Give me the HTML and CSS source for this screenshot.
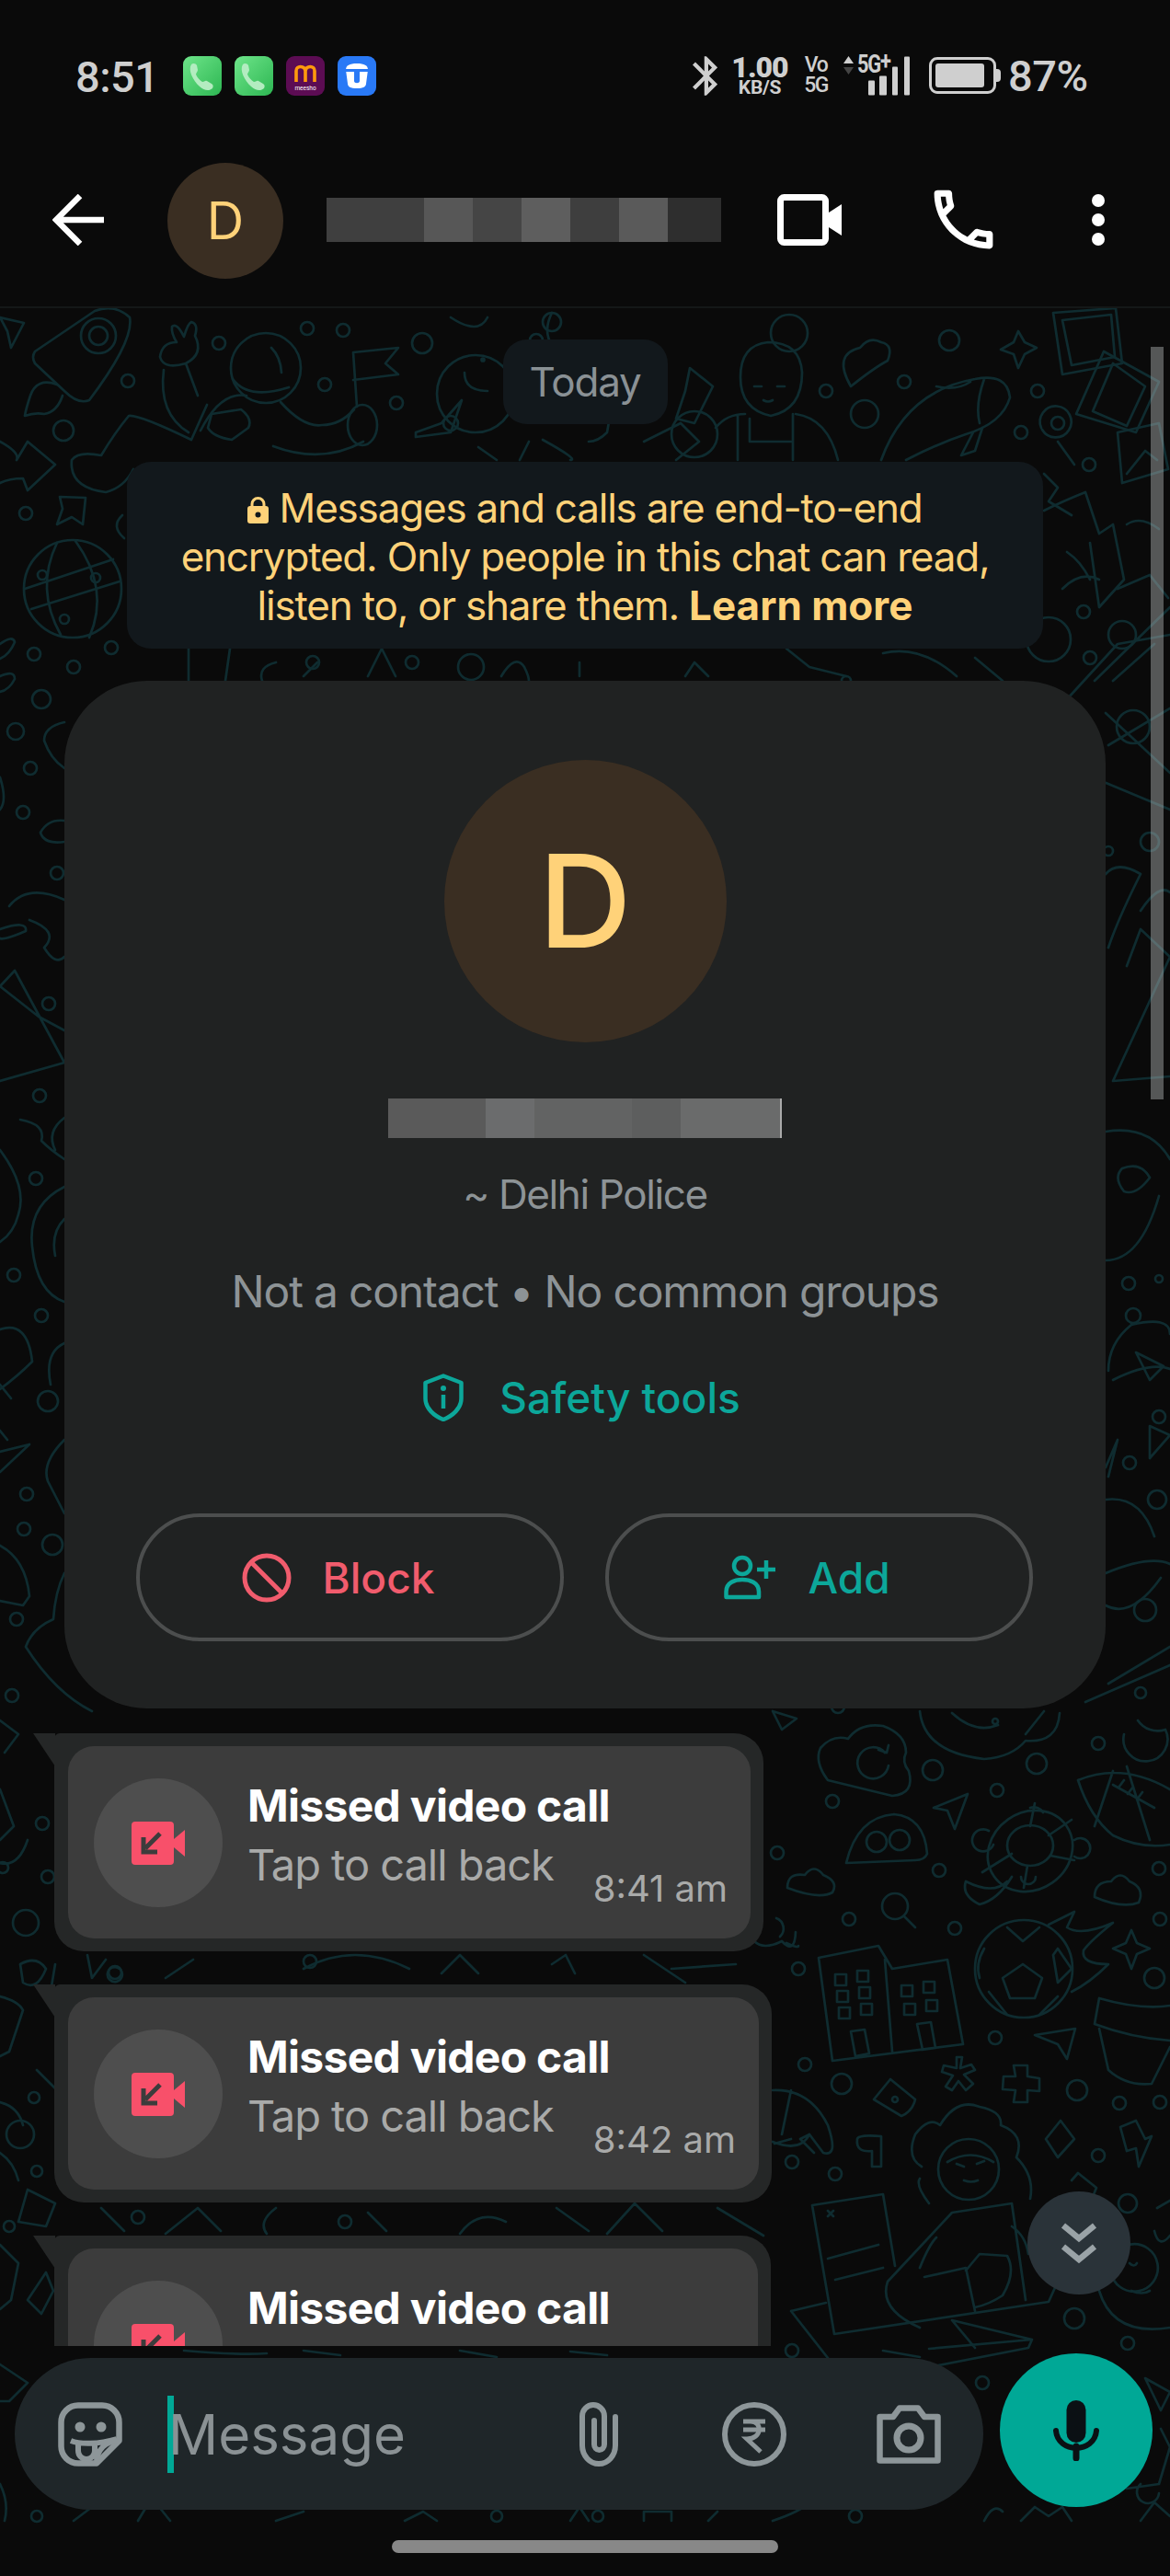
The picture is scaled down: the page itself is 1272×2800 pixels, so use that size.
FILE: index.html
```html
<!DOCTYPE html>
<html lang="en">
  <head>
    <meta charset="UTF-8" />
    <title>Chat</title>
    <link rel="stylesheet" href="styles.css">
  </head>
  <body>
    <div class="phone">
      <!-- status bar -->
      <div class="status">
        <span class="clock">8:51</span>
        <div class="apps">
          <svg class="app" viewBox="0 0 42 43"><defs><linearGradient id="green" x1="0" y1="0" x2="1" y2="1"><stop offset="0" stop-color="#6ee58a"/><stop offset="1" stop-color="#2db652"/></linearGradient></defs><rect width="42" height="43" rx="9" fill="url(#green)"/><path d="M9 9c2-2 5-1 6 1l1 5c0 2-2 3-2 5 2 4 4 6 7 8 2 0 3-2 5-1l5 3c2 1 2 3 1 5-3 3-9 3-14-2C11 27 5 15 9 9z" fill="#b3ecc0"/></svg>
          <svg class="app" viewBox="0 0 42 43"><rect width="42" height="43" rx="9" fill="url(#green)"/><path d="M9 9c2-2 5-1 6 1l1 5c0 2-2 3-2 5 2 4 4 6 7 8 2 0 3-2 5-1l5 3c2 1 2 3 1 5-3 3-9 3-14-2C11 27 5 15 9 9z" fill="#b3ecc0"/></svg>
          <svg class="app" viewBox="0 0 42 43"><rect width="42" height="43" rx="9" fill="#5c0c53"/><path d="M11 28V16c0-6 9-6 10 0v12M21 16c1-6 10-6 10 0v12" fill="none" stroke="#ff9a0d" stroke-width="3.6"/><text x="21" y="37" class="meesho">meesho</text></svg>
          <svg class="app" viewBox="0 0 42 43"><rect width="42" height="43" rx="9" fill="#2979f6"/><path d="M9 15c0-5 4-7 12-7s12 2 12 7l-2 15c0 3-3 5-10 5s-10-2-10-5z" fill="#fff"/><path d="M9 17h9v10c0 3 6 3 6 0V17h9v-3H9z" fill="#2979f6"/></svg>
        </div>
        <div class="sys">
          <svg class="bt" viewBox="5 2 12.7 20"><path d="M17.71 7.71L12 2h-1v7.59L6.41 5 5 6.41 10.59 12 5 17.59 6.41 19 11 14.41V22h1l5.71-5.71-4.3-4.29 4.3-4.29zM13 5.83l1.88 1.88L13 9.59V5.83zm1.88 10.46L13 18.17v-3.76l1.88 1.88z" fill="#cfcfcf"/></svg>
          <div class="speed"><b>1.00</b><small>KB/S</small></div>
          <div class="volte"><span>Vo</span><span>5G</span></div>
          <div class="net">
            <svg class="arrows" viewBox="0 0 11 20"><path d="M5.500 0L11 8H0z" fill="#cfcfcf"/><path d="M5.500 20L11 12H0z" fill="#444"/></svg>
            <span class="fiveg">5G<i>+</i></span>
            <svg class="bars" viewBox="0 0 46 42"><rect y="26" width="7" height="16" rx="1"/><rect x="12" y="21" width="8" height="21" rx="1"/><rect x="26" y="11" width="6" height="31" rx="1"/><rect x="39" width="6" height="42" rx="1"/></svg>
          </div>
          <div class="battery"><span class="level"></span></div>
          <span class="percent">87%</span>
        </div>
      </div>

      <!-- header -->
      <div class="topbar">
        <svg class="back" viewBox="0 0 56 56"><path d="M56 28H4M30 2L4 28l26 26" fill="none" stroke="#fff" stroke-width="6.500"/></svg>
        <div class="avatar">D</div>
        <div class="blur-name"></div>
        <svg class="video" viewBox="0 0 70 56"><rect x="3.500" y="3.500" width="49" height="49" rx="4" fill="none" stroke="#fff" stroke-width="7"/><path d="M56 20L70 11v34L56 36z" fill="#fff"/></svg>
        <svg class="call" viewBox="0 0 24 24"><path d="M6.540 5c.06.89.21 1.76.45 2.590l-1.200 1.200c-.41-1.200-.67-2.470-.76-3.790h1.510m9.860 12.020c.85.24 1.720.39 2.600.45v1.490c-1.320-.09-2.590-.35-3.800-.75l1.200-1.190M7.500 3H4c-.55 0-1 .45-1 1 0 9.390 7.610 17 17 17 .55 0 1-.45 1-1v-3.490c0-.55-.45-1-1-1-1.240 0-2.450-.2-3.570-.57-.1-.04-.21-.05-.31-.05-.26 0-.51.1-.71.29l-2.200 2.200c-2.830-1.450-5.150-3.760-6.590-6.590l2.200-2.200c.28-.28.36-.67.25-1.020C8.700 6.450 8.500 5.250 8.500 4c0-.55-.45-1-1-1z" fill="#fff"/></svg>
        <div class="dots"><span></span><span></span><span></span></div>
      </div>

      <!-- chat area -->
      <div class="chat">
        <svg class="wallpaper" viewBox="0 335 1272 2408">
          <g fill="none" stroke="#0f2c30" stroke-width="2.700" stroke-linecap="round" stroke-linejoin="round">
            <!-- top band, left -->
            <path d="M38 382L103 338Q125 330 141 345Q146 370 97 435Q85 440 70 425L38 395Q34 388 38 382z"/>
            <circle cx="107" cy="365" r="19"/><circle cx="107" cy="365" r="10"/>
            <path d="M62 418Q40 410 33 430Q28 445 27 452Q38 448 48 450Q62 448 68 430"/>
            <path d="M0 345L26 351 12 378 8 360z"/>
            <path d="M178 402Q172 450 205 470M215 430L202 395Q222 385 212 365Q216 352 208 350 204 352 200 366 192 350 187 355 186 362 192 372 176 372 174 388 178 402 202 395"/>
            <circle cx="289" cy="400" r="38"/><path d="M253 412Q270 435 314 421M295 378Q305 388 306 405"/>
            <path d="M218 468Q240 425 268 430M225 440L208 478Q150 450 140 452Q125 470 110 495Q85 490 78 500Q75 530 115 535 135 530 145 510"/>
            <path d="M230 450L262 445Q275 455 270 465L252 478Q232 475 226 465z"/>
            <path d="M384 383L433 378 419 395 433 407 384 413M384 383L388 442"/>
            <ellipse cx="394" cy="462" rx="16" ry="22"/>
            <path d="M305 437Q330 465 350 462Q370 462 385 445M297 485Q350 505 395 480"/>
            <path d="M0 480Q22 492 18 500L30 480 60 505 30 533 25 520Q10 520 0 525"/>
            <circle cx="69" cy="468" r="11"/><circle cx="139" cy="414" r="7"/><circle cx="238" cy="373" r="7"/><circle cx="334" cy="357" r="7"/><circle cx="373" cy="359" r="7"/><circle cx="353" cy="418" r="7"/><circle cx="431" cy="438" r="7"/><circle cx="459" cy="373" r="11"/><circle cx="28" cy="558" r="7"/>
            <path d="M65 540L93 541 90 570 78 562 62 570 68 553z"/>
            <path d="M133 560Q120 572 135 585"/>
            <circle cx="79" cy="640" r="53"/><path d="M27 640L123 608M34 662L130 632M82 588Q120 640 97 693M62 590Q38 640 66 690"/><circle cx="46" cy="625" r="5"/><circle cx="104" cy="628" r="5"/><circle cx="70" cy="673" r="5"/>
            <circle cx="37" cy="711" r="7"/><circle cx="121" cy="704" r="7"/><circle cx="80" cy="725" r="7"/>
            <path d="M0 700Q14 690 16 698 10 712 0 716M0 735Q16 728 16 738 10 750 0 752"/>
            <!-- top band, middle -->
            <circle cx="517" cy="428" r="42"/><path d="M505 405Q505 425 530 425"/><circle cx="525" cy="391" r="1.500"/>
            <path d="M452 470L480 460 502 435 490 470 452 475z"/><circle cx="490" cy="460" r="8"/>
            <path d="M490 345Q520 365 530 345M600 340Q590 360 600 375"/>
            <path d="M655 390Q670 420 660 470Q650 480 640 480"/>
            <path d="M590 478Q630 500 620 500M700 480L740 460 760 480 735 500"/>
            <path d="M575 480L565 500M520 486L540 500"/>
            <circle cx="600" cy="350" r="10"/><circle cx="583" cy="370" r="7"/>
            <path d="M750 400L775 420 755 460 735 455 745 425z"/>
            <path d="M805 410Q805 445 838 452Q872 445 872 405Q870 372 835 372Q805 375 805 410z"/><circle cx="858" cy="362" r="20"/>
            <path d="M820 420h8M845 420h8M830 435q5 3 10 0M778 465Q790 450 810 450M865 450Q900 455 911 500M802 452V500M862 450V500M815 455V480H860"/>
            <circle cx="755" cy="472" r="25"/>
            <path d="M925 420Q905 385 935 378Q945 365 958 372Q972 375 965 392Q950 400 925 420z"/>
            <circle cx="898" cy="425" r="7"/><circle cx="983" cy="415" r="7"/><circle cx="940" cy="450" r="15"/><circle cx="1032" cy="370" r="11"/><circle cx="1128" cy="425" r="7"/><circle cx="1110" cy="470" r="7"/>
            <path d="M958 500Q985 425 1060 412Q1095 405 1098 432Q1090 460 1050 472Q1020 482 985 500M1018 420Q1040 425 1055 415M1058 470L1045 495 1060 490 1068 465M1070 412Q1060 440 1065 460"/>
            <path d="M1107 360L1114 372 1127 378 1114 385 1107 400 1102 385 1088 380 1102 372z"/>
            <path d="M1145 340L1213 335 1220 395 1155 407zM1155 348L1208 342 1212 388 1165 397z"/>
            <path d="M1170 450L1200 382 1260 415 1235 470 1170 450zM1188 447L1210 395 1245 420 1225 463z"/>
            <circle cx="1150" cy="460" r="7"/><path d="M1132 465a17 17 0 1 1 1 2M1150 480l18 25"/>
            <path d="M1215 470L1260 460 1270 510 1220 525z M1225 515L1245 490 1258 500"/>
            <circle cx="1184" cy="505" r="7"/>
            <path d="M1135 515L1150 530 1140 545 1165 560"/>
            <path d="M1135 555Q1155 545 1180 535L1195 580 1210 570 1222 630 1195 660 1185 590M1160 600Q1175 610 1185 630M1155 640Q1175 620 1195 630"/>
            <path d="M1225 570Q1240 560 1260 575M1215 640L1250 625 1270 650"/>
            <circle cx="1178" cy="665" r="7"/><circle cx="1220" cy="690" r="15"/><circle cx="1185" cy="715" r="7"/><circle cx="1140" cy="695" r="24"/><circle cx="920" cy="740" r="5"/>
            <path d="M1160 760L1215 700 1272 690M1190 740L1272 660M1210 740L1255 700"/>
            <path d="M745 735L755 720 770 735M855 705L880 725 920 735M960 710Q1000 700 1040 735M1060 715L1090 740"/>
            <path d="M250 705L245 740M205 705V740M300 720Q280 725 285 740M330 735L345 720M400 735L415 705 430 735M545 735Q560 710 570 725 575 735 575 740M630 735V720"/>
            <circle cx="340" cy="720" r="7"/><circle cx="448" cy="720" r="7"/><circle cx="512" cy="725" r="14"/>
            <!-- left strip -->
            <circle cx="45" cy="760" r="10"/><circle cx="17" cy="795" r="9"/><circle cx="33" cy="835" r="7"/><circle cx="25" cy="883" r="7"/><circle cx="62" cy="949" r="7"/><circle cx="53" cy="1091" r="7"/><circle cx="43" cy="1191" r="7"/><circle cx="39" cy="1281" r="7"/><circle cx="15" cy="1386" r="7"/><circle cx="45" cy="1430" r="7"/><circle cx="52" cy="1523" r="11"/><circle cx="29" cy="1624" r="7"/><circle cx="26" cy="1662" r="7"/><circle cx="57" cy="1679" r="11"/><circle cx="18" cy="1760" r="7"/><circle cx="13" cy="1843" r="7"/>
            <path d="M70 785Q48 790 48 805 55 825 70 835M0 845Q8 870 0 880"/>
            <path d="M70 892Q52 890 44 905Q48 918 70 915M10 985Q30 960 70 978M0 1010Q30 1000 28 1012 5 1022 0 1020M32 1000Q65 1012 48 1030 60 1050 70 1040"/>
            <path d="M16 1055L70 1155 0 1175M16 1055L0 1072 42 1105 70 1120"/>
            <path d="M22 1217Q50 1222 45 1240 55 1250 70 1260M70 1215Q50 1230 60 1250"/>
            <path d="M0 1250Q30 1290 20 1320 15 1340 0 1350M70 1290Q30 1310 35 1355 40 1405 70 1415M70 1325Q55 1340 60 1365"/>
            <path d="M0 1445Q30 1435 35 1480 20 1495 0 1510M70 1460Q48 1470 55 1505 M0 1505L12 1520"/>
            <path d="M0 1578L32 1570 0 1600M0 1555L8 1565M70 1565Q45 1590 52 1610L70 1645"/>
            <path d="M0 1680Q28 1695 32 1735L25 1745 0 1740M70 1710Q60 1730 58 1760 35 1770 28 1790 60 1840 100 1860"/>
            <!-- right strip -->
            <circle cx="1232" cy="790" r="18"/><path d="M1202 775L1272 840M1205 810L1272 770M1200 850L1272 880"/>
            <circle cx="1250" cy="915" r="10"/><circle cx="1205" cy="925" r="5"/>
            <path d="M1202 950Q1215 935 1240 950 1215 1000 1205 1030M1240 990Q1260 960 1272 970M1225 1050L1240 1010 1272 1040 1210 1175 1272 1170"/>
            <path d="M1202 1230Q1250 1222 1272 1260M1202 1370Q1240 1370 1260 1300M1220 1270Q1240 1262 1250 1280 1235 1300 1222 1295 1210 1280 1220 1270z"/>
            <circle cx="1227" cy="1395" r="7"/><circle cx="1260" cy="1390" r="4"/>
            <path d="M1205 1490Q1205 1460 1230 1440 1272 1430 1272 1450M1210 1500Q1250 1480 1272 1488M1235 1470L1265 1485 1250 1500z"/><circle cx="1232" cy="1430" r="8"/>
            <circle cx="1260" cy="1540" r="7"/><circle cx="1228" cy="1590" r="7"/><circle cx="1258" cy="1630" r="10"/>
            <path d="M1202 1595L1215 1565 1205 1605M1250 1550L1272 1560 1250 1585z"/>
            <path d="M1202 1630Q1240 1625 1255 1670M1202 1710Q1250 1690 1272 1700M1202 1745Q1230 1760 1262 1715"/>
            <path d="M1205 1830L1272 1790M1180 1850L1272 1810"/><circle cx="1245" cy="1750" r="12"/><circle cx="1240" cy="1840" r="6"/>
            <!-- lower right: page coords worked out from the crops -->
            <path d="M840 1860L850 1880 866 1868z"/><circle cx="911" cy="1855" r="7"/><circle cx="1194" cy="1895" r="7"/><circle cx="1127" cy="1917" r="11"/><circle cx="1014" cy="1924" r="11"/><circle cx="1084" cy="1946" r="7"/><circle cx="905" cy="1958" r="7"/><circle cx="845" cy="2014" r="7"/><circle cx="1021" cy="2033" r="7"/><circle cx="1260" cy="2031" r="7"/><circle cx="923" cy="2086" r="7"/><circle cx="1038" cy="2096" r="7"/><circle cx="1261" cy="2086" r="7"/><circle cx="1255" cy="2150" r="11"/><circle cx="868" cy="2140" r="7"/><circle cx="1082" cy="2215" r="7"/><circle cx="875" cy="2244" r="7"/><circle cx="915" cy="2265" r="11"/><circle cx="1171" cy="2272" r="11"/><circle cx="1217" cy="2286" r="7"/><circle cx="1261" cy="2285" r="7"/><circle cx="861" cy="2350" r="7"/><circle cx="908" cy="2363" r="7"/><circle cx="1194" cy="2343" r="7"/><circle cx="1226" cy="2395" r="10"/>
            <path d="M900 1935Q885 1915 892 1900Q905 1885 922 1890Q935 1872 960 1876Q985 1885 985 1905Q980 1915 988 1925Q995 1950 970 1952zM962 1905a17 17 0 1 0 4 14M955 1902l9 3 2-8"/>
            <path d="M920 2025Q932 1975 972 1972Q1005 1975 1008 2015Q1005 2022 995 2022z"/><circle cx="953" cy="2002" r="11"/><circle cx="978" cy="2000" r="11"/>
            <path d="M1015 1965L1052 1950 1038 1988 1030 1968z"/>
            <path d="M1000 1860Q1005 1905 1070 1912Q1100 1910 1115 1892Q1150 1895 1152 1862M1035 1862Q1060 1885 1085 1875M1115 1885L1135 1860"/><circle cx="1082" cy="1871" r="3"/>
            <path d="M1222 1885a24 24 0 1 0 45 -5 26 26 0 0 1 -30 -10"/>
            <path d="M1172 1935Q1220 1915 1272 1945M1172 1935Q1185 1975 1210 1995 1240 2010 1272 2005M1210 1925L1190 1985M1225 1920L1250 2000 M1210 1940L1255 1965M1222 1935l-6 8M1232 1942l-6 8M1242 1948l-6 8"/>
            <path d="M1120 1965a12 12 0 0 1 14 5M1075 1990a12 12 0 1 0 5 15M1168 2000a11 11 0 1 1 0 18M1095 2045Q1080 2060 1050 2045Q1045 2060 1065 2070Q1085 2065 1100 2040M1110 2040a8 8 0 0 0 16 0"/>
            <ellipse cx="1120" cy="2012" rx="48" ry="42" transform="rotate(-35 1120 2012)"/><ellipse cx="1120" cy="2006" rx="25" ry="22"/><path d="M1120 1985L1125 1960M1140 1995L1165 1978M1142 2017L1168 2022M1117 2028L1113 2052M1100 2015L1068 2035"/>
            <path d="M856 2052Q856 2035 875 2038Q885 2025 895 2038Q912 2045 905 2057Q890 2065 856 2052z"/>
            <path d="M1190 2062Q1190 2045 1208 2045Q1218 2032 1228 2045Q1245 2052 1238 2068Q1220 2075 1190 2062z"/>
            <circle cx="973" cy="2072" r="14"/><path d="M983 2083L995 2095"/>
            <path d="M820 2110Q830 2120 850 2110 864 2125 865 2100M844 2085a12 12 0 0 1 4 20M855 2112Q868 2118 868 2115"/>
            <path d="M890 2128L955 2115 970 2140 1030 2130 1047 2222 905 2240zM962 2130L970 2230M925 2208L930 2235 945 2232 940 2206zM997 2200L1003 2228 1017 2226 1012 2198z"/>
            <path d="M908 2146h12v12h-12zM932 2142h12v12h-12zM910 2164h12v12h-12zM934 2160h12v12h-12zM912 2182h12v12h-12zM936 2178h12v12h-12zM980 2158h12v12h-12zM1004 2154h12v12h-12zM983 2178h12v12h-12zM1007 2174h12v12h-12z"/>
            <circle cx="1113" cy="2140" r="53"/><path d="M1095 2095L1112 2110 1130 2095M1112 2135L1133 2150 1125 2172H1098L1090 2150zM1150 2118L1165 2140 1150 2155 1145 2125zM1070 2118Q1060 2135 1065 2150M1075 2165L1095 2190M1150 2170L1130 2190M1140 2092L1168 2078 1160 2095Q1175 2105 1210 2090 1185 2110 1178 2120Q1175 2135 1205 2135 1185 2155 1165 2165"/>
            <path d="M1230 2098L1236 2112 1250 2118 1236 2124 1230 2140 1224 2124 1210 2118 1224 2112z"/>
            <path d="M1195 2172Q1240 2185 1272 2180M1195 2172L1190 2200Q1230 2215 1272 2218M1195 2205L1205 2250Q1225 2268 1252 2265L1272 2225"/>
            <path d="M1125 2212L1169 2205 1160 2238 1150 2222z"/>
            <path d="M1040 2236L1040 2248 1026 2245 1024 2252 1036 2256 1028 2268 1035 2272 1042 2262 1050 2272 1058 2265 1048 2255 1060 2250 1056 2244 1044 2248 1046 2236z"/>
            <path d="M1102 2245h15v12l13 2v14l-13 -1v13h-15l2 -13 -14 -1 1 -14h13z"/>
            <path d="M950 2282L968 2260 995 2282Q992 2295 980 2300z"/><circle cx="973" cy="2282" r="3"/>
            <path d="M840 2272Q880 2270 900 2310 912 2345 895 2340L880 2320 870 2325 885 2340M842 2330L860 2325M880 2320Q870 2340 840 2328M860 2272L850 2320"/>
            <path d="M932 2325Q933 2320 958 2322L958 2355 948 2355 948 2338Q930 2340 932 2325z"/>
            <path d="M1153 2305L1168 2325 1150 2345 1137 2325z"/>
            <path d="M1218 2312L1235 2305 1245 2325 1252 2322 1238 2355 1235 2335 1225 2338z"/>
            <circle cx="1053" cy="2358" r="33"/><path d="M1030 2350Q1055 2335 1080 2350M1040 2352l8 3M1062 2352l8 -3M1048 2370q8 3 15 0M1002 2355Q985 2345 995 2320 1010 2300 1022 2310 1040 2280 1065 2290 1090 2295 1088 2310 1115 2320 1105 2345 1125 2365 1120 2390M1010 2395Q995 2375 1000 2368"/>
            <path d="M1165 2370L1172 2362 1192 2378 1185 2395"/>
            <path d="M883 2397L960 2385 973 2463M883 2397L907 2537 1140 2502 1150 2480M900 2455L955 2440M908 2478L960 2465M900 2403l6 6M906 2403l-6 6M860 2512L898 2503M860 2512L900 2563M1035 2522L1122 2543 1118 2552 1015 2572M1035 2522L1060 2552M1010 2553L1122 2543"/>
            <path d="M1000 2530Q955 2510 965 2480L1035 2405 1100 2395 1115 2500M1000 2465Q1010 2440 1018 2432M1005 2475L1050 2465 1060 2512M1050 2468L1065 2450 1095 2452Q1105 2470 1090 2495 1075 2505 1060 2508M1100 2420Q1115 2430 1118 2450"/>
            <path d="M1258 2400L1272 2392M1255 2425Q1260 2445 1272 2430M1195 2490Q1210 2540 1272 2530M1212 2450a24 24 0 1 0 42 30 24 24 0 0 0 -42 -30z"/><path d="M1230 2490q12 5 20 0M1228 2460q5 5 8 0"/>
            <circle cx="1168" cy="2520" r="11"/><circle cx="1226" cy="2547" r="7"/><circle cx="861" cy="2555" r="7"/><circle cx="1068" cy="2590" r="7"/>
            <path d="M1245 2585L1272 2600 1262 2620zM1262 2640L1272 2660 1260 2700 1225 2705M1240 2700a12 12 0 1 0 20 10"/>
            <path d="M840 2740Q870 2730 880 2720M1070 2740Q1080 2720 1090 2730M1110 2740L1125 2725 1140 2735 1155 2725 1165 2740M1240 2740L1255 2720 1272 2735"/>
            <circle cx="930" cy="2735" r="7"/>
            <!-- left of the bubbles -->
            <path d="M0 1870L20 1885 5 1905M0 1945L15 1985 0 2000M0 2025Q20 2030 30 2000"/>
            <circle cx="3" cy="2030" r="6"/><circle cx="28" cy="2090" r="14"/><circle cx="46" cy="1982" r="7"/><circle cx="52" cy="2040" r="7"/>
            <path d="M22 2135Q40 2125 50 2140 40 2165 25 2155zM60 2135L55 2165M95 2125L100 2150 115 2130M130 2140a8 8 0 1 0 1 1M180 2150L210 2130M330 2140Q385 2110 445 2140M480 2145L500 2125 520 2145M600 2135L615 2125 625 2145M700 2125L745 2155M730 2140L800 2135M850 2128"/>
            <circle cx="125" cy="2144" r="7"/><circle cx="337" cy="2132" r="7"/>
            <path d="M0 2170Q20 2175 25 2185L10 2230 0 2235M0 2285Q20 2290 25 2310M40 2250L60 2270M0 2340Q15 2350 20 2370M30 2380L60 2395 50 2420 20 2415z"/>
            <circle cx="22" cy="2320" r="15"/><circle cx="37" cy="2280" r="6"/><circle cx="40" cy="2360" r="6"/>
            <path d="M110 2400L135 2425M180 2428L215 2400 240 2425M300 2400Q280 2415 290 2428M400 2405L420 2425M500 2428Q520 2400 550 2415M605 2400L640 2425M660 2428L690 2395 720 2425M780 2400L830 2430"/>
            <circle cx="150" cy="2410" r="7"/><circle cx="375" cy="2415" r="7"/>
            <path d="M0 2440L20 2460 12 2500 0 2510M50 2470L58 2490 45 2515 30 2500 38 2488z"/>
            <circle cx="10" cy="2420" r="6"/>
            <path d="M0 2570L30 2590 10 2610 0 2610M0 2700Q10 2720 5 2740M80 2740L100 2725M150 2740L165 2715 185 2740M300 2740L330 2730M440 2740L460 2730 475 2740M620 2740L630 2725 640 2740M700 2740V2730H730V2740M770 2740L780 2730"/>
            <path d="M200 2555Q260 2560 290 2558M330 2555L370 2560M500 2555L540 2562M620 2556L660 2560M960 2555L1000 2562"/>
            <circle cx="540" cy="2735" r="6"/><circle cx="650" cy="2735" r="6"/><circle cx="40" cy="2735" r="6"/>
          </g>
        </svg>

        <div class="scrollbar"></div>

        <div class="messages">
          <div class="date-chip">Today</div>
          <div class="e2e">
            <svg class="lock" viewBox="0 0 23 29"><path d="M5 12V8a6.500 6.500 0 0 1 13 0v4" fill="none" stroke="#ffd279" stroke-width="3"/><rect y="10" width="23" height="19" rx="3" fill="#ffd279"/><circle cx="11.500" cy="19.500" r="3" fill="#12181c"/></svg>
            Messages and calls are end-to-end<br>encrypted. Only people in this chat can read,<br>listen to, or share them. <b>Learn more</b>
          </div>

          <div class="card">
            <div class="card-avatar">D</div>
            <div class="card-blur"></div>
            <div class="push-name">~ Delhi Police</div>
            <div class="card-info">Not a contact &#8226; No common groups</div>
            <div class="safety">
              <svg class="shield" viewBox="0 0 44 52"><path d="M22 2.500L41.500 10V27C41.500 38 32 46 22 50C12 46 2.500 38 2.500 27V10z" fill="none" stroke="#0ca79a" stroke-width="4.500" stroke-linejoin="round"/><circle cx="22" cy="16" r="3" fill="#0ca79a"/><path d="M22 23V38" stroke="#0ca79a" stroke-width="4.500"/></svg>
              <span>Safety tools</span>
            </div>
            <div class="actions">
              <div class="btn btn-block">
                <svg viewBox="0 0 54 54"><circle cx="27" cy="27" r="24" fill="none" stroke="#f15c6d" stroke-width="5"/><path d="M10 10L44 44" stroke="#f15c6d" stroke-width="5"/></svg>
                <span>Block</span>
              </div>
              <div class="btn btn-add">
                <svg viewBox="0 0 58 50"><circle cx="20" cy="12" r="9" fill="none" stroke="#0ca79a" stroke-width="4.500"/><path d="M2.500 46V40C2.500 30 12 27 20 27S38 30 38 40V46z" fill="none" stroke="#0ca79a" stroke-width="4.500" stroke-linejoin="round"/><path d="M46 6V26M36 16H56" stroke="#0ca79a" stroke-width="4.500"/></svg>
                <span>Add</span>
              </div>
            </div>
          </div>

          <div class="bubble">
            <div class="bubble-inner">
              <div class="call-icon"><svg viewBox="0 0 58 47"><rect width="46" height="47" rx="4" fill="#f8506a"/><path d="M46 19L58 9V38L46 28z" fill="#f8506a"/><path d="M31 13L15 29M13 17V33H28" fill="none" stroke="#3c3c3c" stroke-width="5"/></svg></div>
              <div class="call-text">
                <div class="call-title">Missed video call</div>
                <div class="call-row"><span class="call-sub">Tap to call back</span><span class="call-time">8:41 am</span></div>
              </div>
            </div>
          </div>
          <div class="bubble">
            <div class="bubble-inner">
              <div class="call-icon"><svg viewBox="0 0 58 47"><rect width="46" height="47" rx="4" fill="#f8506a"/><path d="M46 19L58 9V38L46 28z" fill="#f8506a"/><path d="M31 13L15 29M13 17V33H28" fill="none" stroke="#3c3c3c" stroke-width="5"/></svg></div>
              <div class="call-text">
                <div class="call-title">Missed video call</div>
                <div class="call-row"><span class="call-sub">Tap to call back</span><span class="call-time">8:42 am</span></div>
              </div>
            </div>
          </div>
          <div class="bubble">
            <div class="bubble-inner">
              <div class="call-icon"><svg viewBox="0 0 58 47"><rect width="46" height="47" rx="4" fill="#f8506a"/><path d="M46 19L58 9V38L46 28z" fill="#f8506a"/><path d="M31 13L15 29M13 17V33H28" fill="none" stroke="#3c3c3c" stroke-width="5"/></svg></div>
              <div class="call-text call-text-wide">
                <div class="call-title">Missed video call</div>
              </div>
            </div>
          </div>
        </div>

        <div class="scroll-down">
          <svg viewBox="0 0 40 44"><path d="M3 3L20 17 37 3M3 26L20 40 37 26" fill="none" stroke="#9aa3a7" stroke-width="6.500"/></svg>
        </div>

        <div class="composer">
          <div class="input">
            <svg class="sticker" viewBox="0 0 70 70"><path d="M22 3.500H48A18.500 18.500 0 0 1 66.500 22V42L42 66.500H22A18.500 18.500 0 0 1 3.500 48V22A18.500 18.500 0 0 1 22 3.500z" fill="none" stroke="#8d9699" stroke-width="6.500" stroke-linejoin="round"/><circle cx="24" cy="27" r="5.500" fill="#8d9699"/><circle cx="47" cy="27" r="5.500" fill="#8d9699"/><path d="M14 42C24 46 44 46 64 40M22 45V53A9 9 0 0 0 40 53V44M42 66C42 52 52 42 66 42" fill="none" stroke="#8d9699" stroke-width="6"/></svg>
            <span class="caret"></span>
            <span class="placeholder">Message</span>
            <svg class="clip" viewBox="0 0 47 70"><path d="M41 16V47A18 20 0 0 1 5 47V15A12 12 0 0 1 29 15V46A5.500 6 0 0 1 18 46V20" fill="none" stroke="#8d9699" stroke-width="6" stroke-linecap="round"/></svg>
            <svg class="rupee" viewBox="0 0 70 70"><circle cx="35" cy="35" r="32" fill="none" stroke="#8d9699" stroke-width="6"/><path d="M23 21H47M23 30H47M31 21C44 21 44 40 27 40L42 54" fill="none" stroke="#8d9699" stroke-width="5"/></svg>
            <svg class="camera" viewBox="0 0 70 64"><path d="M3.500 13H18L25 3.500H45L52 13H66.500V60.500H3.500z" fill="none" stroke="#8d9699" stroke-width="6.500" stroke-linejoin="round"/><circle cx="35" cy="36" r="13" fill="none" stroke="#8d9699" stroke-width="7"/></svg>
          </div>
          <div class="mic">
            <svg viewBox="0 0 50 66"><rect x="14.500" width="21" height="46" rx="10.500" fill="#0b1014"/><path d="M3 33C5 58 45 58 47 33" fill="none" stroke="#0b1014" stroke-width="6" stroke-linecap="round"/><path d="M25 50V63" stroke="#0b1014" stroke-width="7" stroke-linecap="round"/></svg>
          </div>
        </div>
      </div>

      <div class="navbar"><span class="home"></span></div>
    </div>
  </body>
</html>
```
FILE: styles.css
```css
* {
  margin: 0;
  padding: 0;
  box-sizing: border-box;
}
body {
  background: #0a0a0a;
  font-family: Inter, "Noto Sans", sans-serif;
}
svg {
  display: block;
  flex: none;
}
.phone {
  width: 1272px;
  height: 2800px;
  background: #0a0a0a;
  overflow: hidden;
  display: flex;
  flex-direction: column;
}

/* status bar */
.status {
  height: 125px;
  padding: 39px 90px 0 82px;
  display: flex;
  align-items: flex-start;
  color: #cfcfcf;
  font-family: Roboto, sans-serif;
}
.clock {
  font-size: 47px;
  font-weight: 500;
  line-height: 86px;
  width: 117px;
  letter-spacing: -0.5px;
  margin-top: 2px;
}
.apps {
  display: flex;
  gap: 14px;
  margin-top: 22px;
}
.app {
  width: 42px;
  height: 43px;
}
.meesho {
  font-family: Roboto, sans-serif;
  font-size: 6.5px;
  fill: #fff;
  text-anchor: middle;
}
.sys {
  margin-left: auto;
  display: flex;
  height: 86px;
  align-items: center;
}
.bt {
  width: 27px;
  height: 43px;
}
.speed {
  width: 68px;
  margin-left: 12px;
  display: flex;
  flex-direction: column;
  align-items: center;
  font-weight: 700;
}
.speed b {
  font-size: 32px;
  line-height: 27px;
  letter-spacing: -1px;
}
.speed small {
  font-size: 21px;
  line-height: 17px;
  letter-spacing: -0.3px;
}
.volte {
  width: 24px;
  margin-left: 15px;
  display: flex;
  flex-direction: column;
  align-items: center;
  font-size: 23px;
  line-height: 22px;
  font-weight: 500;
  letter-spacing: -1.5px;
}
.net {
  width: 73px;
  height: 43px;
  margin-left: 18px;
  position: relative;
}
.arrows {
  position: absolute;
  left: 0;
  top: 0;
  width: 11px;
  height: 20px;
}
.fiveg {
  position: absolute;
  left: 15px;
  top: -4px;
  font-size: 28px;
  line-height: 26px;
  font-weight: 700;
  letter-spacing: -1.5px;
  transform: scaleX(0.78);
  transform-origin: left top;
}
.fiveg i {
  font-style: normal;
  position: relative;
  top: -3px;
}
.bars {
  position: absolute;
  right: 0;
  top: 0;
  width: 46px;
  height: 43px;
  fill: #cfcfcf;
}
.battery {
  width: 73px;
  height: 40px;
  margin-left: 20px;
  border: 3px solid #cfcfcf;
  border-radius: 9px;
  padding: 4px;
  position: relative;
}
.battery::after {
  content: "";
  position: absolute;
  right: -8px;
  top: 10px;
  width: 5px;
  height: 14px;
  background: #cfcfcf;
  border-radius: 0 4px 4px 0;
}
.battery .level {
  display: block;
  width: 53px;
  height: 100%;
  background: #cfcfcf;
  border-radius: 3px;
}
.percent {
  width: 86px;
  margin-left: 13px;
  font-size: 47px;
  font-weight: 500;
  letter-spacing: -0.5px;
  white-space: nowrap;
}

/* top bar */
.topbar {
  height: 210px;
  padding-left: 57px;
  display: flex;
  align-items: flex-start;
  border-bottom: 2px solid #141818;
}
.back {
  width: 56px;
  height: 56px;
  margin-top: 86px;
}
.avatar {
  width: 126px;
  height: 126px;
  margin: 52px 0 0 69px;
  border-radius: 50%;
  background: #3a2e22;
  color: #ffd279;
  font-size: 56px;
  line-height: 126px;
  text-align: center;
}
.blur-name {
  width: 429px;
  height: 48px;
  margin: 90px 0 0 47px;
  background: linear-gradient(90deg, #3f3f3f 0 106px, #575757 106px 159px, #454545 159px 212px, #5e5e5e 212px 265px, #3e3e3e 265px 318px, #5a5a5a 318px 371px, #2e2e2e 371px);
}
.video {
  width: 70px;
  height: 56px;
  margin: 86px 0 0 61px;
}
.call {
  width: 85px;
  height: 85px;
  margin: 71px 0 0 90px;
}
.dots {
  margin: 86px 0 0 97px;
  display: flex;
  flex-direction: column;
  gap: 7px;
}
.dots span {
  width: 14px;
  height: 14px;
  border-radius: 50%;
  background: #fff;
}

/* chat */
.chat {
  position: relative;
  height: 2408px;
}
.wallpaper {
  position: absolute;
  left: 0;
  top: 0;
  width: 1272px;
  height: 2408px;
}
.scrollbar {
  position: absolute;
  left: 1251px;
  top: 42px;
  width: 14px;
  height: 818px;
  background: rgba(190, 195, 195, 0.42);
}
.messages {
  position: relative;
  height: 2215px;
  overflow: hidden;
  display: flex;
  flex-direction: column;
  align-items: center;
}
.messages > div {
  flex: none;
}
.date-chip {
  width: 179px;
  height: 92px;
  margin-top: 34px;
  border-radius: 26px;
  background: #12181c;
  color: #8a9195;
  font-size: 44px;
  letter-spacing: -1.2px;
  line-height: 92px;
  text-align: center;
}
.e2e {
  width: 996px;
  height: 203px;
  margin-top: 41px;
  padding-top: 24px;
  border-radius: 26px;
  background: #12181c;
  color: #ffd279;
  font-size: 44px;
  letter-spacing: -1.2px;
  line-height: 53px;
  text-align: center;
}
.e2e b {
  font-weight: 700;
  letter-spacing: 0;
}
.lock {
  display: inline-block;
  width: 23px;
  height: 29px;
  vertical-align: -1px;
}
.card {
  width: 1132px;
  height: 1117px;
  margin-top: 35px;
  padding: 86px 78px 0;
  border-radius: 90px;
  background: #202222;
  display: flex;
  flex-direction: column;
  align-items: center;
}
.card-avatar {
  width: 307px;
  height: 307px;
  border-radius: 50%;
  background: #3a2e22;
  color: #ffd279;
  font-size: 140px;
  font-weight: 500;
  line-height: 307px;
  text-align: center;
  flex: none;
}
.card-blur {
  width: 428px;
  height: 43px;
  margin-top: 61px;
  background: linear-gradient(90deg, #5a5a5a 0 106px, #6b6c6d 106px 159px, #626363 159px 265px, #5d5e5e 265px 318px, #6a6b6b 318px 426px, #aaa 426px);
  flex: none;
}
.push-name {
  margin-top: 36px;
  color: #8d9396;
  font-size: 44px;
  letter-spacing: -1.4px;
  line-height: 50px;
}
.card-info {
  margin-top: 56px;
  color: #8d9396;
  font-size: 48px;
  letter-spacing: -1.2px;
  line-height: 50px;
  white-space: nowrap;
}
.safety {
  margin-top: 60px;
  height: 60px;
  padding-right: 7px;
  display: flex;
  align-items: center;
  gap: 39px;
  color: #0ca79a;
  font-size: 46px;
  font-weight: 500;
}
.shield {
  width: 44px;
  height: 52px;
}
.actions {
  align-self: stretch;
  margin-top: 96px;
  display: flex;
  gap: 45px;
}
.btn {
  width: 465px;
  height: 139px;
  padding-right: 26px;
  border: 4px solid #4c4e4e;
  border-radius: 70px;
  display: flex;
  align-items: center;
  justify-content: center;
  font-size: 46px;
  font-weight: 500;
}
.btn-block {
  color: #f15c6d;
  gap: 34px;
}
.btn-block svg {
  width: 54px;
  height: 54px;
}
.btn-add {
  color: #0ca79a;
  gap: 33px;
}
.btn-add svg {
  width: 58px;
  height: 50px;
}

/* missed call bubbles */
.bubble {
  align-self: flex-start;
  position: relative;
  margin: 27px 0 9px 59px;
  height: 237px;
  padding: 14px 14px 14px 15px;
  background: #252727;
  border-radius: 6px 32px 32px 32px;
}
.bubble::before {
  content: "";
  position: absolute;
  left: -23px;
  top: 0;
  width: 24px;
  height: 36px;
  background: #252727;
  clip-path: polygon(0 0, 100% 0, 100% 100%);
}
.bubble-inner {
  height: 209px;
  padding: 35px 25px 0 28px;
  background: #3c3c3c;
  border-radius: 28px;
  display: flex;
  gap: 27px;
}
.call-icon {
  width: 140px;
  height: 140px;
  border-radius: 50%;
  background: #4e4e4e;
  display: flex;
  align-items: center;
  justify-content: center;
}
.call-icon svg {
  width: 58px;
  height: 47px;
}
.call-text {
  margin-top: -4px;
  min-width: 522px;
}
.call-text-wide {
  min-width: 530px;
}
.call-title {
  color: #fff;
  font-size: 48px;
  font-weight: 700;
  line-height: 67px;
  letter-spacing: -0.7px;
}
.call-row {
  display: flex;
  align-items: flex-start;
  gap: 43px;
}
.call-sub {
  color: #a9aaa9;
  font-size: 47px;
  letter-spacing: -1.05px;
  line-height: 62px;
}
.call-time {
  color: #a9aaa9;
  font-size: 40px;
  line-height: 48px;
  margin-top: 33px;
}

.scroll-down {
  position: absolute;
  left: 1117px;
  top: 2047px;
  width: 112px;
  height: 112px;
  border-radius: 50%;
  background: #2a3339;
  display: flex;
  align-items: center;
  justify-content: center;
}
.scroll-down svg {
  width: 40px;
  height: 44px;
}

/* input row */
.composer {
  position: relative;
  height: 193px;
  padding-left: 16px;
  display: flex;
  align-items: flex-start;
  gap: 18px;
}
.input {
  width: 1053px;
  height: 165px;
  margin-top: 13px;
  padding-left: 47px;
  border-radius: 83px;
  background: #1f2629;
  display: flex;
  align-items: center;
}
.sticker {
  width: 70px;
  height: 70px;
}
.caret {
  width: 7px;
  height: 84px;
  margin-left: 49px;
  background: #00a896;
}
.placeholder {
  margin-left: -6px;
  width: 445px;
  color: #8a9194;
  font-size: 60px;
}
.clip {
  width: 47px;
  height: 70px;
}
.rupee {
  width: 70px;
  height: 70px;
  margin-left: 110px;
}
.camera {
  width: 70px;
  height: 64px;
  margin-left: 98px;
}
.mic {
  width: 166px;
  height: 167px;
  margin-top: 8px;
  border-radius: 50%;
  background: #00a896;
  display: flex;
  align-items: center;
  justify-content: center;
}
.mic svg {
  width: 50px;
  height: 66px;
}

.navbar {
  height: 57px;
  display: flex;
  justify-content: center;
  padding-top: 18px;
}
.home {
  width: 420px;
  height: 14px;
  border-radius: 7px;
  background: #888;
}
```
